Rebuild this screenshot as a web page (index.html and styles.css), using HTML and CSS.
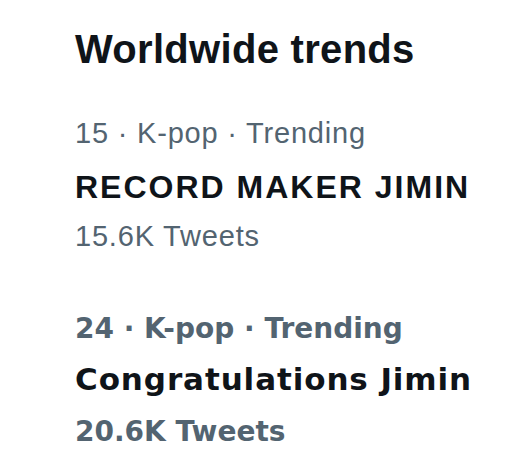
FILE: index.html
```html
<!DOCTYPE html>
<html>
<head>
	<meta charset="utf-8">
	<meta name="viewport" content="width=device-width, initial-scale=1">
	<title>Worldwide trends</title>
	<link rel="stylesheet" href="styles.css">
</head>
<body>

	<div class="panel">
		<h2 class="panel_title">Worldwide trends</h2>

		<div class="trend">
			<p class="trend_meta">15 · K-pop · Trending</p>
			<p class="trend_name">RECORD MAKER JIMIN</p>
			<p class="trend_count">15.6K Tweets</p>
		</div>

		<div class="trend trend_bold">
			<p class="trend_meta">24 · K-pop · Trending</p>
			<p class="trend_name">Congratulations Jimin</p>
			<p class="trend_count">20.6K Tweets</p>
		</div>
	</div>

</body>
</html>
```

FILE: styles.css
```css
body {
	font-family: "Liberation Sans", Arial, sans-serif;
	margin: 0;
	background: #fff;
	color: #0f1419;
}
p {
	margin: 0;
}
.panel {
	padding: 25px 0 0 75px;
}
.panel_title {
	margin: 0;
	font-size: 40px;
	line-height: 48px;
	font-weight: bold;
	letter-spacing: 0.3px;
}
.trend_meta,
.trend_count {
	font-size: 29px;
	line-height: 36px;
	color: #536471;
	letter-spacing: 0.8px;
}
.trend_name {
	font-size: 32px;
	line-height: 40px;
	font-weight: bold;
	letter-spacing: 2px;
}
.trend {
	margin-top: 42px;
}
.trend .trend_name {
	margin-top: 16px;
}
.trend .trend_count {
	margin-top: 11px;
}

/* second trend uses a heavier, wider face */
.trend_bold {
	margin-top: 57px;
	font-family: "DejaVu Sans", sans-serif;
}
.trend_bold .trend_meta,
.trend_bold .trend_count {
	font-size: 28px;
	font-weight: bold;
	letter-spacing: 0;
}
.trend_bold .trend_name {
	margin-top: 12px;
	font-size: 31px;
	letter-spacing: 0.9px;
}
.trend_bold .trend_count {
	margin-top: 15px;
}
```
